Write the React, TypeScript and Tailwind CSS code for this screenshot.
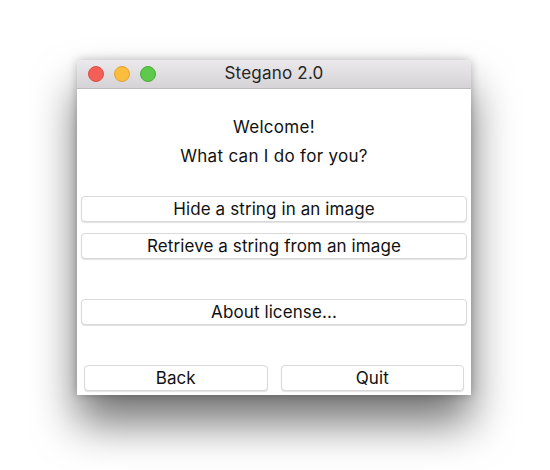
import React from "react";

const font = { fontFamily: "Inter, 'Noto Sans', 'Liberation Sans', sans-serif" };

function Btn({ label, className = "" }: { label: string; className?: string }) {
  return (
    <div
      className={
        "h-[26px] pt-[2px] flex items-center justify-center bg-white rounded-[4px] border border-[#d9d9d9] shadow-[0_1px_1px_rgba(0,0,0,0.12)] text-[17px] tracking-[0.1px] text-[#111111] " +
        className
      }
    >
      {label}
    </div>
  );
}

export default function App() {
  return (
    <div className="w-[550px] h-[470px] bg-white overflow-hidden pt-[60px] pl-[77px]" style={font}>
      <div className="w-[394px] h-[335px] bg-white rounded-t-[5px] flex flex-col shadow-[0_28px_44px_rgba(0,0,0,0.55),0_0_10px_rgba(0,0,0,0.25)]">
        <div className="relative h-[29px] rounded-t-[5px] bg-gradient-to-b from-[#ebe9eb] to-[#d5d3d5] border-b border-[#bdbbbd] flex items-center justify-center shrink-0">
          <div className="absolute left-[11px] top-[6px] flex gap-[10px]">
            <div className="w-[16px] h-[16px] rounded-full bg-[#f15f57] border border-[#de4c45]" />
            <div className="w-[16px] h-[16px] rounded-full bg-[#fbbd3d] border border-[#e0a32f]" />
            <div className="w-[16px] h-[16px] rounded-full bg-[#5ec94a] border border-[#4aad38]" />
          </div>
          <span className="text-[17px] tracking-[0.2px] text-[#262626]">Stegano 2.0</span>
        </div>
        <div className="flex flex-col items-center text-[17px] tracking-[0.3px] leading-[29px] text-[#111111] pt-[24px]">
          <div>Welcome!</div>
          <div>What can I do for you?</div>
        </div>
        <div className="flex flex-col px-[4px] mt-[25px] gap-[11px]">
          <Btn label="Hide a string in an image" />
          <Btn label="Retrieve a string from an image" />
          <Btn label="About license..." className="mt-[29px]" />
        </div>
        <div className="flex px-[7px] gap-[13px] mt-[40px]">
          <Btn label="Back" className="flex-1" />
          <Btn label="Quit" className="flex-1" />
        </div>
      </div>
    </div>
  );
}
